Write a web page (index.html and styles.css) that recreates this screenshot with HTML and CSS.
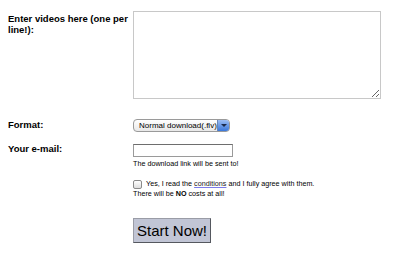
FILE: index.html
```html
<!DOCTYPE html>
<html lang="en">
<head>
    <meta charset="UTF-8">
    <title>Video download</title>
    <link rel="stylesheet" href="styles.css">
</head>
<body>
    <table class="form">
        <tr>
            <td class="label label-top">Enter videos here (one per line!):</td>
            <td><textarea class="videos"></textarea></td>
        </tr>
        <tr>
            <td class="label">Format:</td>
            <td>
                <div class="select">
                    <span class="select-text">Normal download(.flv)</span>
                    <span class="select-arrow"></span>
                </div>
            </td>
        </tr>
        <tr>
            <td class="label label-mail">Your e-mail:</td>
            <td>
                <input type="text" class="email">
                <div class="note">The download link will be sent to!</div>
            </td>
        </tr>
        <tr>
            <td></td>
            <td class="agree">
                <label><span class="box"></span><span>Yes, I read the <a href="#">conditions</a> and I fully agree with them.</span></label>
                <div class="note">There will be <b>NO</b> costs at all!</div>
            </td>
        </tr>
        <tr>
            <td></td>
            <td><button class="start">Start Now!</button></td>
        </tr>
    </table>
</body>
</html>
```

FILE: styles.css
```css
body {
    margin: 0;
    padding: 0;
    background: #fff;
    font-family: 'Liberation Sans', Arial, sans-serif;
    color: #000;
}

.form {
    border-collapse: collapse;
    margin: 11px 0 0 8px;
}

.form td {
    padding: 0;
    vertical-align: top;
}

.label {
    width: 125px;
    font-size: 9.5px;
    font-weight: bold;
    line-height: 11px;
    padding-top: 5px !important;
}

.label-top {
    padding-top: 2px !important;
}

.label-mail {
    padding-top: 0 !important;
}

.videos {
    display: block;
    width: 248px;
    height: 88px;
    margin: 0 0 15px 0;
    border: 1px solid #c8c8c8;
    box-sizing: border-box;
    resize: both;
}

.select {
    display: inline-flex;
    align-items: center;
    width: 97px;
    height: 13px;
    margin: 5px 0 11px 0;
    border: 1px solid #9a9a9a;
    border-radius: 4px;
    background: linear-gradient(#ffffff, #e8e8e8);
    box-sizing: border-box;
    overflow: hidden;
}

.select-text {
    flex: 1;
    font-size: 8px;
    padding-left: 5px;
    white-space: nowrap;
}

.select-arrow {
    width: 12px;
    height: 100%;
    background: linear-gradient(#9cbdf2, #3a78db);
    border-left: 1px solid #6b86b5;
    position: relative;
}

.select-arrow:after {
    content: '';
    position: absolute;
    left: 3px;
    top: 4px;
    border-left: 3px solid transparent;
    border-right: 3px solid transparent;
    border-top: 3px solid #1b2a4a;
}

.email {
    display: block;
    width: 100px;
    height: 13px;
    margin: 1px 0 0 0;
    padding: 0;
    border: 1px solid #9a9a9a;
    border-top-color: #6e6e6e;
    box-sizing: border-box;
}

.note {
    font-size: 7.2px;
    line-height: 10px;
    margin-top: 2px;
    color: #000;
}

.agree {
    padding-top: 10px !important;
    font-size: 7.2px;
}

.agree label {
    display: flex;
    align-items: center;
    gap: 4px;
    line-height: 10px;
}

.agree .note {
    margin-top: 0;
}

.box {
    display: inline-block;
    width: 9px;
    height: 9px;
    border: 1px solid #8a8a8a;
    border-radius: 2px;
    background: linear-gradient(#ffffff, #dedede);
    box-sizing: border-box;
}

a {
    color: #222;
    text-decoration: underline;
    text-decoration-color: #7b7bea;
}

.start {
    margin-top: 19px;
    width: 78px;
    height: 25px;
    padding: 0;
    font-family: 'Liberation Sans', Arial, sans-serif;
    font-size: 15px;
    white-space: nowrap;
    color: #000;
    background: #c1c5d5;
    border: 1px solid #9a9ca6;
    border-right-color: #55585f;
    border-bottom-color: #55585f;
    border-radius: 0;
}
```
